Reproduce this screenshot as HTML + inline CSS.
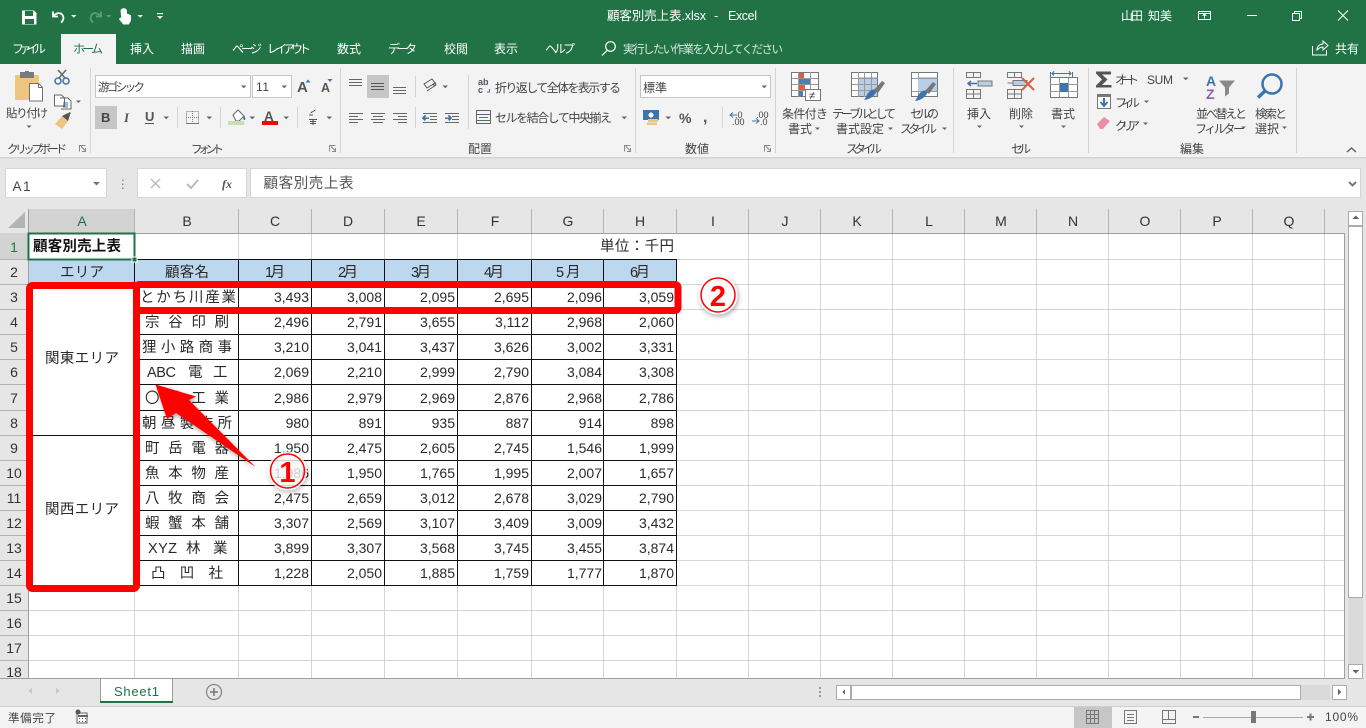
<!DOCTYPE html>
<html lang="ja"><head><meta charset="utf-8"><title>顧客別売上表.xlsx - Excel</title>
<style>
html,body{margin:0;padding:0;background:#fff;overflow:hidden;width:1366px;height:728px}
svg{display:block}
text{font-family:"Liberation Sans","Noto Sans CJK JP",sans-serif}
.w{fill:#fff;font-size:12px}
.r{fill:#444;font-size:11.5px}
.c{fill:#2a2a2a;font-size:14px}
.n text{text-anchor:end}
.h{fill:#333;font-size:14px;text-anchor:middle}
.g{stroke:#d4d4d4;stroke-width:1;fill:none}
.k{stroke:#111;stroke-width:1;fill:none}
.i{stroke:#666;stroke-width:1;fill:none}
.t{fill:#666}
</style></head><body>
<svg width="1366" height="728" viewBox="0 0 1366 728" xmlns="http://www.w3.org/2000/svg" shape-rendering="crispEdges">
<!-- backgrounds -->
<rect width="1366" height="728" fill="#e6e6e6"/>
<rect width="1366" height="64" fill="#217346"/>
<rect y="64" width="1366" height="93" fill="#f3f3f3"/>
<rect y="157" width="1366" height="1.5" fill="#d4d4d4"/>
<rect x="61" y="34" width="55" height="30" fill="#f3f3f3"/>

<!-- title bar -->
<g shape-rendering="auto">
<path d="M22 10.500h12l2.500 2.500v11.500h-14.500z M25 11v5h8v-5z M25 24v-5h9v5z" fill="#fff" fill-rule="evenodd"/>
<path d="M53 11.500v5h5 M53.500 16c3-3.500 6.500-3.500 8.500-1.500 2.500 2.500 1.500 6-1 8" fill="none" stroke="#fff" stroke-width="1.800"/>
<path d="M71 15l5.500 0-2.750 2.800z M143 15l-5.500 0 2.750 2.800z" fill="#e8f0ea"/>
<path d="M101 11.500v5h-5 M100.500 16c-3-3.500-6.500-3.500-8.500-1.500-2.500 2.500-1.500 6 1 8" fill="none" stroke="#5d9a79" stroke-width="1.800"/>
<path d="M106 15l5.500 0-2.750 2.800z" fill="#5d9a79"/>
<path d="M121 11a2.800 2.800 0 0 1 5.500 0v3l4 1.500v5l-2 3.500h-5l-4-5 1.500-1 1 1z" fill="#fff" stroke="#fff"/>
<rect x="157" y="13" width="6" height="1.200" fill="#fff"/><path d="M157 16h6l-3 3z" fill="#fff"/>
</g>
<text class="w" x="607" y="20" textLength="99" style="font-size:12.500px">顧客別売上表.xlsx</text>
<text class="w" x="714" y="20" style="font-size:12.500px">-</text>
<text class="w" x="728" y="20" textLength="29" style="font-size:12.500px">Excel</text>
<text class="w" x="1121" y="20" textLength="22">山田</text>
<text class="w" x="1148" y="20" textLength="24">知美</text>
<g fill="none" stroke="#fff">
<rect x="1198.500" y="11.500" width="12" height="8"/><path d="M1198 13.500h13 M1204.500 18.500v-4 M1202.500 16l2-2 2 2"/>
<path d="M1247 15.500h10"/>
<rect x="1292.500" y="13.500" width="7" height="7"/><path d="M1294.500 13.500v-2h7v7h-2"/>
<path d="M1338 10.500l10 10 M1348 10.500l-10 10" shape-rendering="auto"/>
</g>

<!-- tabs -->
<text class="w" x="12" y="53" textLength="34">ファイル</text>
<text x="73" y="53" textLength="30" style="font-size:12px;fill:#217346">ホーム</text>
<text class="w" x="130" y="53" textLength="24">挿入</text>
<text class="w" x="181" y="53" textLength="24">描画</text>
<text class="w" x="232" y="53" textLength="30">ページ</text>
<text class="w" x="267" y="53" textLength="44">レイアウト</text>
<text class="w" x="337" y="53" textLength="24">数式</text>
<text class="w" x="388" y="53" textLength="29">データ</text>
<text class="w" x="444" y="53" textLength="24">校閲</text>
<text class="w" x="494" y="53" textLength="24">表示</text>
<text class="w" x="545" y="53" textLength="30">ヘルプ</text>
<g shape-rendering="auto" fill="none" stroke="#fff" stroke-width="1.200"><circle cx="610.500" cy="46.500" r="4.800"/><path d="M607 50.500l-5 5"/></g>
<text x="623" y="53" textLength="160" style="font-size:11.500px;fill:#d8e6dd">実行したい作業を入力してください</text>
<g shape-rendering="auto" fill="none" stroke="#fff"><path d="M1312.500 46v9h14v-5 M1317 50c0-4 3-6 6-6v-3l5 4.500-5 4.500v-3c-2 0-4 1-6 3z"/></g>
<text class="w" x="1335" y="53" textLength="24">共有</text>

<!-- ribbon separators -->
<g fill="#d4d4d4">
<rect x="90" y="68" width="1" height="85"/><rect x="340" y="68" width="1" height="85"/><rect x="635" y="68" width="1" height="85"/><rect x="775" y="68" width="1" height="85"/><rect x="953" y="68" width="1" height="85"/><rect x="1088" y="68" width="1" height="85"/><rect x="1296" y="68" width="1" height="85"/>
<rect x="415" y="76" width="1" height="21"/><rect x="415" y="107" width="1" height="21"/><rect x="468" y="75" width="1" height="54"/>
<rect x="177" y="107" width="1" height="21"/><rect x="220" y="107" width="1" height="21"/><rect x="297" y="107" width="1" height="21"/>
<rect x="722" y="107" width="1" height="21"/>
</g>

<!-- clipboard -->
<g shape-rendering="auto">
<rect x="15" y="75" width="24" height="25" rx="1" fill="#eec57f"/>
<rect x="20" y="72" width="14" height="6" fill="#7a7a7a"/><rect x="25" y="71" width="4" height="3" fill="#7a7a7a"/>
<path d="M29.500 83.500h9l4 4v13.500h-13z" fill="#fff" stroke="#707070"/>
<path d="M38.500 83.500v4h4" fill="none" stroke="#707070"/>
<circle cx="58" cy="81" r="3" fill="none" stroke="#3d74ac" stroke-width="1.500"/><circle cx="66" cy="81" r="3" fill="none" stroke="#3d74ac" stroke-width="1.500"/>
<path d="M59 78l7-8 M65 78l-7-8" stroke="#666" stroke-width="1.500"/>
<path d="M54.500 95h7l3 3v8h-10z M60 98h8l3 3v8h-10" fill="#fff" stroke="#666"/>
<path d="M63 103h5 M63 105h5 M63 107h5" stroke="#3d74ac"/>
<path d="M76 100.500h5l-2.500 2.500z" fill="#666"/>
<path d="M55 124l7-8 6 5-6 8z" fill="#eec57f"/><path d="M62 116l6-3 2 2-2 6z" fill="#555"/><path d="M68 114l1.500-2 1.500 1-1.500 2z" fill="#555"/>
</g>
<text class="r" x="6" y="117" textLength="42" style="font-size:11.500px">貼り付け</text>
<path d="M26.500 125.500h5l-2.500 2.500z" class="t" shape-rendering="auto"/>
<text class="r" x="7" y="153" textLength="60">クリップボード</text>
<g class="i" style="stroke:#888"><path d="M79.500 151.500v-6h6 M85.500 148v3.500h-3.500 M81 146.500l4 4"/></g>

<!-- font group -->
<rect x="95.500" y="75.500" width="155" height="22" fill="#fff" stroke="#c6c6c6"/>
<rect x="252.500" y="75.500" width="39" height="22" fill="#fff" stroke="#c6c6c6"/>
<text class="r" x="98" y="91" textLength="47">游ゴシック</text>
<text class="r" x="256" y="91" textLength="13" style="font-size:12px">11</text>
<path d="M241 85.500h5.500l-2.750 2.800zM281.500 85.500h5.500l-2.750 2.800z" class="t" shape-rendering="auto"/>
<text x="297" y="92" style="font-size:15px;fill:#555;font-weight:bold" textLength="11">A</text>
<path d="M305.500 82.500l2.500-3 2.500 3z" fill="#3d74ac" shape-rendering="auto"/>
<text x="321" y="92" style="font-size:12.500px;fill:#555;font-weight:bold" textLength="9">A</text>
<path d="M327.500 79h5l-2.500 3z" fill="#3d74ac" shape-rendering="auto"/>
<rect x="95" y="106" width="22" height="23" fill="#c6c6c6"/>
<text x="101" y="122" style="font-size:13px;font-weight:bold;fill:#444">B</text>
<text x="124" y="122" style="font-size:13px;font-style:italic;font-family:'Liberation Serif',serif;font-weight:bold;fill:#555">I</text>
<text x="145" y="121" style="font-size:13px;font-weight:bold;fill:#555">U</text><rect x="145" y="123" width="9" height="1" fill="#555"/>
<path d="M163.500 116.500h5.500l-2.750 2.800zM206.500 116.500h5.500l-2.750 2.800zM249.500 116.500h5.500l-2.750 2.800zM283.500 116.500h5.500l-2.750 2.800zM326.500 116.500h5.500l-2.750 2.800z" class="t" shape-rendering="auto"/>
<g fill="none" stroke="#777" stroke-dasharray="1 1"><rect x="186.500" y="111.500" width="12" height="12"/><path d="M192.500 111v12 M186 117.500h13"/></g>
<path d="M186 123.500h13" stroke="#777"/>
<g shape-rendering="auto">
<path d="M233 115l5-5 6 6-5 5h-3z" fill="#fff" stroke="#666"/><path d="M244 116c2 1 1.500 5 0 4-1-1-1-2 0-4z" fill="#3d74ac"/>
</g>
<rect x="228" y="121" width="16" height="4" fill="#c6e0b4"/>
<text x="264" y="121" style="font-size:13.500px;font-weight:bold;fill:#555">A</text>
<rect x="262" y="121" width="16" height="4" fill="#f00"/>
<g stroke="#555" fill="none"><path d="M309 115h4 M309 119.500h8 M310 121.500h6 M310 123.500h6 M313 119v6 M310.500 113l5-3"/></g>
<text class="r" x="191" y="153" textLength="33" style="font-size:11.500px">フォント</text>

<!-- alignment -->
<rect x="367" y="75" width="22" height="23" fill="#c6c6c6"/>
<g stroke="#666" fill="none">
<path d="M349 79.500h13 M349 82.500h13 M349 85.500h13"/>
<path d="M371 83.500h13 M371 86.500h13 M371 89.500h13" stroke="#555"/>
<path d="M393 87.500h13 M393 90.500h13 M393 93.500h13"/>
<path d="M349 113.500h14 M349 116.500h9 M349 119.500h14 M349 122.500h9"/>
<path d="M371 113.500h14 M373 116.500h10 M371 119.500h14 M373 122.500h10"/>
<path d="M393 113.500h14 M398 116.500h9 M393 119.500h14 M398 122.500h9"/>
<path d="M423 113.500h14 M430 116.500h7 M430 119.500h7 M423 122.500h14" />
<path d="M445 113.500h14 M452 116.500h7 M452 119.500h7 M445 122.500h14" />
</g>
<path d="M423 118h6 M425.500 115.500l-2.500 2.500 2.500 2.500" stroke="#3d74ac" fill="none" stroke-width="1.500"/>
<path d="M445 118h6 M448.500 115.500l2.500 2.500-2.500 2.500" stroke="#3d74ac" fill="none" stroke-width="1.500"/>
<g shape-rendering="auto" fill="none" stroke="#555"><path d="M424 84l8-5 3 4-8 5z M427 91l9-6 M436 85l-1-3 M436 85l-3 0"/></g>
<path d="M442.500 85.500h5.500l-2.750 2.800zM621.500 116.500h5.500l-2.750 2.800z" class="t" shape-rendering="auto"/>
<text x="478" y="85" style="font-size:9px;font-weight:bold;fill:#555">ab</text>
<text x="478" y="93" style="font-size:9px;font-weight:bold;fill:#555">c</text>
<path d="M487 92h2.500v-3" stroke="#3d74ac" fill="none"/>
<text class="r" x="495" y="92" textLength="126" style="font-size:12px">折り返して全体を表示する</text>
<rect x="476.500" y="110.500" width="14" height="13" fill="none" stroke="#666"/><path d="M477 114.500h13 M477 120.500h13" stroke="#666"/><path d="M479 117.500h9" stroke="#3d74ac"/>
<text class="r" x="495" y="122" textLength="117" style="font-size:12px">セルを結合して中央揃え</text>
<text class="r" x="468" y="153" textLength="24" style="font-size:12px">配置</text>
<g style="stroke:#888" class="i"><path d="M624.500 151.500v-6h6 M630.500 148v3.500h-3.500 M626 146.500l4 4"/><path d="M329.500 151.500v-6h6 M335.500 148v3.500h-3.500 M331 146.500l4 4"/><path d="M764.500 151.500v-6h6 M770.500 148v3.500h-3.500 M766 146.500l4 4"/></g>

<!-- number -->
<rect x="640.500" y="75.500" width="130" height="22" fill="#fff" stroke="#c6c6c6"/>
<text class="r" x="643" y="92" textLength="24" style="font-size:12px">標準</text>
<path d="M761.500 85.500h5.500l-2.750 2.800zM665.500 116.500h5.500l-2.750 2.800z" class="t" shape-rendering="auto"/>
<rect x="643" y="110" width="16" height="10" fill="#3d74ac"/><circle cx="651" cy="115" r="2.500" fill="#fff"/>
<rect x="648" y="119" width="10" height="3" fill="#eec57f"/><rect x="647" y="122.500" width="10" height="2.500" fill="#eec57f"/>
<text x="679" y="123" style="font-size:14px;font-weight:bold;fill:#555">%</text>
<text x="703" y="122" style="font-size:16px;font-weight:bold;fill:#555">,</text>
<text x="735" y="118" style="font-size:9px;fill:#444">.0</text><text x="732" y="125" style="font-size:9px;fill:#444">.00</text>
<path d="M730 115h7 M733 112.500l-3 2.500 3 2.500" fill="none" stroke="#3d74ac" shape-rendering="auto"/>
<text x="756" y="118" style="font-size:9px;fill:#444">.00</text><text x="760" y="125" style="font-size:9px;fill:#444">.0</text>
<path d="M752 121h7 M756 118.500l3 2.500-3 2.500" fill="none" stroke="#3d74ac" shape-rendering="auto"/>
<text class="r" x="685" y="153" textLength="24" style="font-size:12px">数値</text>

<!-- styles -->
<rect x="791.500" y="72.500" width="27" height="24" fill="#fff" stroke="#777"/>
<rect x="798" y="73" width="6" height="5" fill="#d9603c"/><rect x="798" y="79" width="12" height="5" fill="#4a7fb8"/><rect x="798" y="85" width="7" height="5" fill="#d9603c"/><rect x="798" y="91" width="5" height="5" fill="#4a7fb8"/>
<path d="M798.500 72v25 M810.500 72v25 M792 78.500h26 M792 84.500h26 M792 90.500h26" stroke="#999" fill="none"/>
<rect x="805.500" y="89.500" width="15" height="11" fill="#fff" stroke="#777"/>
<text x="809" y="99" style="font-size:11px;fill:#333">≠</text>
<text class="r" x="782" y="118" textLength="46" style="font-size:12px">条件付き</text>
<text class="r" x="788" y="133" textLength="24" style="font-size:12px">書式</text>
<rect x="851.500" y="72.500" width="26" height="24" fill="#fff" stroke="#777"/>
<rect x="858" y="77" width="19" height="19" fill="#b9cfe8"/>
<path d="M858.500 72v25 M864.500 72v25 M871.500 72v25 M852 78.500h26 M852 84.500h26 M852 90.500h26" stroke="#999" fill="none"/>
<g shape-rendering="auto"><path d="M866 97c2-6 7-9 11-7-1 4-5 9-13 10z" fill="#3d74ac"/><path d="M874 90l8-9 3 2-7 10z" fill="#777"/></g>
<text class="r" x="832" y="118" textLength="64" style="font-size:12px">テーブルとして</text>
<text class="r" x="836" y="133" textLength="48" style="font-size:12px">書式設定</text>
<rect x="911.500" y="72.500" width="26" height="24" fill="#fff" stroke="#777"/>
<rect x="918" y="77" width="19" height="14" fill="#b9cfe8"/>
<path d="M912 78.500h26 M918.500 72v6 M918.500 91v6 M912 91.500h26" stroke="#999" fill="none"/>
<g shape-rendering="auto"><path d="M917 98c2-6 7-9 11-7-1 4-5 9-13 10z" fill="#3d74ac"/><path d="M925 91l8-9 3 2-7 10z" fill="#777"/></g>
<text class="r" x="910" y="118" textLength="29" style="font-size:12px">セルの</text>
<text class="r" x="900" y="133" textLength="37" style="font-size:12px">スタイル</text>
<path d="M815 127.500h5l-2.500 2.500zM888 127.500h5l-2.500 2.500zM942 127.500h5l-2.500 2.500z" class="t" shape-rendering="auto"/>
<text class="r" x="846" y="153" textLength="36" style="font-size:12px">スタイル</text>

<!-- cells -->
<g class="i" style="stroke:#777">
<rect x="966.500" y="72.500" width="14" height="5"/><path d="M973.500 72v5"/>
<rect x="966.500" y="89.500" width="14" height="9"/><path d="M973.500 89v10 M966 94h14"/>
<rect x="1007.500" y="72.500" width="14" height="5"/><path d="M1014.500 72v5"/>
<rect x="1007.500" y="89.500" width="14" height="9"/><path d="M1014.500 89v10 M1007 94h14"/>
</g>
<rect x="978" y="81" width="14" height="5" fill="#b9cfe8" stroke="#777"/>
<path d="M977 83.500h-8 M971 81l-3 2.500 3 2.500" stroke="#3d74ac" fill="none" stroke-width="1.500" shape-rendering="auto"/>
<rect x="1013" y="80.500" width="14" height="5" fill="#b9cfe8" stroke="#777"/>
<path d="M1007.500 83h6" stroke="#777"/>
<path d="M1022 78l12 12 M1034 78l-12 12" stroke="#d9603c" stroke-width="2" shape-rendering="auto" fill="none"/>
<rect x="1050.500" y="77.500" width="27" height="20" fill="#fff" stroke="#777"/>
<path d="M1050 84.500h28 M1050 91.500h28 M1059.500 78v20 M1068.500 78v20" stroke="#999" fill="none"/>
<rect x="1060" y="83" width="8" height="9" fill="#3d74ac"/>
<path d="M1050.500 72v5 M1072.500 72v5 M1052 73.500h19 M1054 71.500l-2 2 2 2 M1069 71.500l2 2-2 2" stroke="#3d74ac" fill="none"/>
<text class="r" x="967" y="118" textLength="24" style="font-size:12px">挿入</text>
<text class="r" x="1009" y="118" textLength="24" style="font-size:12px">削除</text>
<text class="r" x="1051" y="118" textLength="24" style="font-size:12px">書式</text>
<path d="M977 125.500h5l-2.500 2.500zM1019 125.500h5l-2.500 2.500zM1061 125.500h5l-2.500 2.500z" class="t" shape-rendering="auto"/>
<text class="r" x="1011" y="153" textLength="20" style="font-size:12px">セル</text>

<!-- editing -->
<path d="M1096 71.500h15v3h-9l5.500 5-5.500 5.500h9.500v2.500h-15.500v-2l6-6-6-6z" fill="#555" shape-rendering="auto"/>
<text class="r" x="1115" y="84" textLength="24" style="font-size:12px">オート</text>
<text class="r" x="1147" y="84" textLength="26" style="font-size:12px">SUM</text>
<path d="M1183 77.500h5.500l-2.750 2.800zM1144 100.500h5l-2.500 2.500zM1143 122.500h5l-2.500 2.500z" class="t" shape-rendering="auto"/>
<rect x="1097.500" y="94.500" width="13" height="14" fill="#fff" stroke="#777"/><rect x="1098" y="94" width="12" height="3" fill="#777"/>
<path d="M1104 98v7 M1100.500 102l3.500 4 3.500-4" stroke="#3d74ac" fill="none" stroke-width="2" shape-rendering="auto"/>
<text class="r" x="1115" y="107" textLength="25" style="font-size:12px">フィル</text>
<path d="M1097 124l7-7 6 4-7 8h-3z" fill="#e98fa3" shape-rendering="auto"/>
<text class="r" x="1115" y="130" textLength="25" style="font-size:12px">クリア</text>
<text x="1206" y="86" style="font-size:14px;font-weight:bold;fill:#3d74ac" textLength="11">A</text>
<text x="1206" y="99" style="font-size:14px;font-weight:bold;fill:#8d5fb0" textLength="11">Z</text>
<path d="M1219 80.500h16l-6 7v6l-4 3v-9z" fill="#888" shape-rendering="auto"/>
<g shape-rendering="auto" fill="none"><circle cx="1272" cy="84" r="9.500" stroke="#3d74ac" stroke-width="2.500"/><path d="M1265 91l-7 6.500" stroke="#3d74ac" stroke-width="3.500"/></g>
<text class="r" x="1196" y="118" textLength="51" style="font-size:12px">並べ替えと</text>
<text class="r" x="1195" y="133" textLength="50" style="font-size:12px">フィルター</text>
<text class="r" x="1255" y="118" textLength="32" style="font-size:12px">検索と</text>
<text class="r" x="1255" y="133" textLength="24" style="font-size:12px">選択</text>
<path d="M1241 126.500h5l-2.500 2.500zM1282 126.500h5l-2.500 2.500z" class="t" shape-rendering="auto"/>
<text class="r" x="1180" y="153" textLength="24" style="font-size:12px">編集</text>
<path d="M1347 152l4.500-4 4.500 4" fill="none" stroke="#666" stroke-width="1.500" shape-rendering="auto"/>

<!-- formula bar -->
<rect x="5.500" y="168.500" width="101" height="29" fill="#fff" stroke="#d4d4d4"/>
<rect x="137.500" y="168.500" width="109" height="29" fill="#fff" stroke="#d4d4d4"/>
<rect x="250.500" y="168.500" width="1110" height="29" fill="#fff" stroke="#d4d4d4"/>
<text x="12.500" y="191" style="font-size:13.500px;fill:#444" textLength="18">A1</text>
<path d="M93 182h7l-3.500 3.500z" fill="#777" shape-rendering="auto"/>
<path d="M122 179.500h1.500v1.500h-1.500zM122 183.500h1.500v1.500h-1.500zM122 187.500h1.500v1.500h-1.500z" fill="#888"/>
<path d="M151 179l9 9 M160 179l-9 9" stroke="#bbb" stroke-width="1.500" fill="none" shape-rendering="auto"/>
<path d="M187 184l4 4 7-8" stroke="#bbb" stroke-width="2" fill="none" shape-rendering="auto"/>
<text x="222" y="188" style="font-family:'Liberation Serif',serif;font-style:italic;font-weight:bold;font-size:12px;fill:#555">fx</text>
<text x="263.500" y="188" textLength="90" style="font-size:14.500px;fill:#555">顧客別売上表</text>
<path d="M1349 182l3.500 3.500 3.500-3.500" stroke="#777" stroke-width="2" fill="none" shape-rendering="auto"/>

<!-- headers -->
<rect x="0" y="209" width="1345" height="471" fill="#e6e6e6"/>
<path d="M8 228h17v-16z" fill="#b4b4b4" shape-rendering="auto"/>
<rect x="29" y="209" width="105" height="24" fill="#d2d2d2"/>
<rect x="0" y="233" width="28" height="26" fill="#d2d2d2"/>
<rect x="29" y="233" width="1315" height="445" fill="#fff"/>
<g fill="#b4b4b4">
<rect x="134" y="209" width="1" height="24"/><rect x="238" y="209" width="1" height="24"/><rect x="311" y="209" width="1" height="24"/><rect x="384" y="209" width="1" height="24"/><rect x="457" y="209" width="1" height="24"/><rect x="531" y="209" width="1" height="24"/><rect x="603" y="209" width="1" height="24"/><rect x="676" y="209" width="1" height="24"/><rect x="748" y="209" width="1" height="24"/><rect x="820" y="209" width="1" height="24"/><rect x="892" y="209" width="1" height="24"/><rect x="964" y="209" width="1" height="24"/><rect x="1036" y="209" width="1" height="24"/><rect x="1108" y="209" width="1" height="24"/><rect x="1180" y="209" width="1" height="24"/><rect x="1252" y="209" width="1" height="24"/><rect x="1324" y="209" width="1" height="24"/>
<rect x="0" y="259" width="28" height="1"/><rect x="0" y="284" width="28" height="1"/><rect x="0" y="309" width="28" height="1"/><rect x="0" y="334" width="28" height="1"/><rect x="0" y="359" width="28" height="1"/><rect x="0" y="384" width="28" height="1"/><rect x="0" y="410" width="28" height="1"/><rect x="0" y="435" width="28" height="1"/><rect x="0" y="460" width="28" height="1"/><rect x="0" y="485" width="28" height="1"/><rect x="0" y="510" width="28" height="1"/><rect x="0" y="535" width="28" height="1"/><rect x="0" y="560" width="28" height="1"/><rect x="0" y="585" width="28" height="1"/><rect x="0" y="610" width="28" height="1"/><rect x="0" y="635" width="28" height="1"/><rect x="0" y="660" width="28" height="1"/>
</g>
<rect x="28" y="233" width="1317" height="1" fill="#9f9f9f"/>
<rect x="28" y="209" width="1" height="469" fill="#9f9f9f"/>
<rect x="1344" y="233" width="1" height="445" fill="#9f9f9f"/>

<!-- gridlines -->
<path class="g" d="M748.500 234V678 M820.500 234V678 M892.500 234V678 M964.500 234V678 M1036.500 234V678 M1108.500 234V678 M1180.500 234V678 M1252.500 234V678 M1324.500 234V678
M134.500 585V678 M238.500 585V678 M311.500 585V678 M384.500 585V678 M457.500 585V678 M531.500 585V678 M603.500 585V678 M676.500 585V678
M238.500 234V259 M311.500 234V259 M384.500 234V259 M457.500 234V259 M531.500 234V259
M29 259.500H1344 M29 284.500H1344 M29 309.500H1344 M29 334.500H1344 M29 359.500H1344 M29 384.500H1344 M29 410.500H1344 M29 435.500H1344 M29 460.500H1344 M29 485.500H1344 M29 510.500H1344 M29 535.500H1344 M29 560.500H1344 M29 585.500H1344 M29 610.500H1344 M29 635.500H1344 M29 660.500H1344"/>

<!-- table -->
<rect x="29" y="260" width="648" height="24" fill="#bdd7ee"/>
<rect x="29" y="285" width="105" height="300" fill="#fff"/>
<rect x="135" y="285" width="542" height="300" fill="#fff"/>
<path class="k" d="M134.500 259V586 M238.500 259V586 M311.500 259V586 M384.500 259V586 M457.500 259V586 M531.500 259V586 M603.500 259V586 M676.500 259V586
M29 259.500H677 M29 284.500H677 M135 309.500H677 M135 334.500H677 M135 359.500H677 M135 384.500H677 M135 410.500H677 M29 435.500H677 M135 460.500H677 M135 485.500H677 M135 510.500H677 M135 535.500H677 M135 560.500H677 M29 585.500H677"/>

<!-- selection -->
<rect x="28.500" y="233.500" width="106" height="26" fill="none" stroke="#217346" stroke-width="2"/>
<rect x="132" y="257" width="5" height="5" fill="#217346" stroke="#fff" stroke-width="1"/>

<!-- labels -->
<g class="h">
<text x="82" y="226" style="fill:#217346">A</text><text x="187" y="226">B</text><text x="275" y="226">C</text><text x="348" y="226">D</text><text x="421" y="226">E</text><text x="495" y="226">F</text><text x="568" y="226">G</text><text x="640" y="226">H</text><text x="713" y="226">I</text><text x="785" y="226">J</text><text x="857" y="226">K</text><text x="929" y="226">L</text><text x="1001" y="226">M</text><text x="1073" y="226">N</text><text x="1145" y="226">O</text><text x="1217" y="226">P</text><text x="1289" y="226">Q</text>
<text x="14" y="252" style="fill:#217346">1</text><text x="14" y="277">2</text><text x="14" y="302">3</text><text x="14" y="327">4</text><text x="14" y="352">5</text><text x="14" y="377">6</text><text x="14" y="403">7</text><text x="14" y="428">8</text><text x="14" y="453">9</text><text x="14" y="478">10</text><text x="14" y="503">11</text><text x="14" y="528">12</text><text x="14" y="553">13</text><text x="14" y="578">14</text><text x="14" y="603">15</text><text x="14" y="628">16</text><text x="14" y="653">17</text><text x="14" y="677">18</text>
</g>

<!-- cell text -->
<g class="c" style="font-size:14.500px">
<text x="33" y="251" textLength="88" style="font-weight:bold;fill:#111">顧客別売上表</text>
<text x="600" y="251" textLength="74">単位：千円</text>
<text x="60" y="277" textLength="44">エリア</text><text x="165" y="277" textLength="44">顧客名</text>
<text x="265" y="277" textLength="20">1月</text><text x="338" y="277" textLength="20">2月</text><text x="411" y="277" textLength="20">3月</text><text x="484" y="277" textLength="20">4月</text><text x="556" y="277">5</text><text x="566" y="277">月</text><text x="630" y="277" textLength="20">6月</text>
<text x="45" y="363" textLength="74">関東エリア</text>
<text x="45" y="514" textLength="74">関西エリア</text>
<text x="140" y="302" textLength="96">とかち川産業</text>
<text x="145" y="327" textLength="84">宗谷印刷</text>
<text x="142" y="352" textLength="90">狸小路商事</text>
<text x="147" y="377" textLength="29">ABC</text><text x="188" y="377">電</text><text x="213" y="377">工</text>
<text x="145" y="403" textLength="84">〇〇工業</text>
<text x="142" y="428" textLength="90">朝昼製作所</text>
<text x="145" y="453" textLength="84">町岳電器</text>
<text x="145" y="478" textLength="84">魚本物産</text>
<text x="145" y="503" textLength="84">八牧商会</text>
<text x="145" y="528" textLength="84">蝦蟹本舗</text>
<text x="148" y="553" textLength="29">XYZ</text><text x="186" y="553">林</text><text x="213" y="553">業</text>
<text x="151" y="578" textLength="72">凸凹社</text>
</g>
<g class="c n">
<text x="309" y="302">3,493</text><text x="382" y="302">3,008</text><text x="455" y="302">2,095</text><text x="529" y="302">2,695</text><text x="602" y="302">2,096</text><text x="674" y="302">3,059</text>
<text x="309" y="327">2,496</text><text x="382" y="327">2,791</text><text x="455" y="327">3,655</text><text x="529" y="327">3,112</text><text x="602" y="327">2,968</text><text x="674" y="327">2,060</text>
<text x="309" y="352">3,210</text><text x="382" y="352">3,041</text><text x="455" y="352">3,437</text><text x="529" y="352">3,626</text><text x="602" y="352">3,002</text><text x="674" y="352">3,331</text>
<text x="309" y="377">2,069</text><text x="382" y="377">2,210</text><text x="455" y="377">2,999</text><text x="529" y="377">2,790</text><text x="602" y="377">3,084</text><text x="674" y="377">3,308</text>
<text x="309" y="403">2,986</text><text x="382" y="403">2,979</text><text x="455" y="403">2,969</text><text x="529" y="403">2,876</text><text x="602" y="403">2,968</text><text x="674" y="403">2,786</text>
<text x="309" y="428">980</text><text x="382" y="428">891</text><text x="455" y="428">935</text><text x="529" y="428">887</text><text x="602" y="428">914</text><text x="674" y="428">898</text>
<text x="309" y="453">1,950</text><text x="382" y="453">2,475</text><text x="455" y="453">2,605</text><text x="529" y="453">2,745</text><text x="602" y="453">1,546</text><text x="674" y="453">1,999</text>
<text x="309" y="478">1,986</text><text x="382" y="478">1,950</text><text x="455" y="478">1,765</text><text x="529" y="478">1,995</text><text x="602" y="478">2,007</text><text x="674" y="478">1,657</text>
<text x="309" y="503">2,475</text><text x="382" y="503">2,659</text><text x="455" y="503">3,012</text><text x="529" y="503">2,678</text><text x="602" y="503">3,029</text><text x="674" y="503">2,790</text>
<text x="309" y="528">3,307</text><text x="382" y="528">2,569</text><text x="455" y="528">3,107</text><text x="529" y="528">3,409</text><text x="602" y="528">3,009</text><text x="674" y="528">3,432</text>
<text x="309" y="553">3,899</text><text x="382" y="553">3,307</text><text x="455" y="553">3,568</text><text x="529" y="553">3,745</text><text x="602" y="553">3,455</text><text x="674" y="553">3,874</text>
<text x="309" y="578">1,228</text><text x="382" y="578">2,050</text><text x="455" y="578">1,885</text><text x="529" y="578">1,759</text><text x="602" y="578">1,777</text><text x="674" y="578">1,870</text>
</g>

<!-- annotations -->
<defs><filter id="s" x="-30%" y="-30%" width="160%" height="160%"><feDropShadow dx="1" dy="2" stdDeviation="2.500" flood-color="#000" flood-opacity=".35"/></filter></defs>
<g shape-rendering="auto">
<rect x="29.500" y="285.500" width="107" height="303" rx="3" fill="none" stroke="#f00" stroke-width="7"/>
<rect x="136.500" y="284.500" width="541.500" height="26" rx="3" fill="none" stroke="#f00" stroke-width="7"/>
<path d="M155.500 384.500L196 396.500 189 400 255.500 467 176 413 167 419z" fill="#f00" filter="url(#s)"/>
<circle cx="287.500" cy="471" r="19.500" fill="#fff" fill-opacity=".75" filter="url(#s)"/>
<circle cx="287.500" cy="471" r="17" fill="none" stroke="#f00" stroke-width="1.500"/>
<text x="287.500" y="482" text-anchor="middle" style="font-size:29px;font-weight:bold;fill:#f00">1</text>
<circle cx="718" cy="295" r="19.500" fill="#fff" fill-opacity=".95" filter="url(#s)"/>
<circle cx="718" cy="295" r="17" fill="none" stroke="#f00" stroke-width="1.500"/>
<text x="718" y="306" text-anchor="middle" style="font-size:29px;font-weight:bold;fill:#f00">2</text>
</g>

<!-- vertical scrollbar -->
<rect x="1345" y="209" width="21" height="498" fill="#e6e6e6"/>
<rect x="1348" y="212" width="15" height="452" fill="#dadada"/>
<rect x="1348.500" y="211.500" width="14" height="14" fill="#fff" stroke="#ababab"/>
<path d="M1352 219l3.500-3.500 3.500 3.500z" fill="#666"/>
<rect x="1348.500" y="226.500" width="14" height="371" fill="#fff" stroke="#ababab"/>
<rect x="1348.500" y="664.500" width="14" height="14" fill="#fff" stroke="#ababab"/>
<path d="M1352 670l3.500 3.500 3.500-3.500z" fill="#666"/>

<!-- sheet tabs -->
<rect x="0" y="678" width="1345" height="1" fill="#9f9f9f"/>
<rect x="0" y="679" width="1345" height="28" fill="#e6e6e6"/>
<path d="M100.500 703V678.500H172.500V703" fill="#fff" stroke="#9f9f9f"/>
<rect x="100" y="701" width="73" height="2" fill="#217346"/>
<text x="114" y="696" textLength="45" style="font-size:13px;fill:#217346">Sheet1</text>
<path d="M32 688v6l-4-3zM56 688v6l4-3z" fill="#c8c8c8"/>
<g shape-rendering="auto"><circle cx="214" cy="692" r="7.500" fill="none" stroke="#888" stroke-width="1.300"/><path d="M210 692h8 M214 688v8" stroke="#777" stroke-width="1.500"/></g>
<path d="M819 687h2v2h-2zM819 691h2v2h-2zM819 695h2v2h-2z" fill="#999"/>
<rect x="836.500" y="685.500" width="14" height="14" fill="#fff" stroke="#ababab"/>
<path d="M845 689v6l-3-3z" fill="#666"/>
<rect x="851.500" y="685.500" width="449" height="14" fill="#fff" stroke="#ababab"/>
<rect x="1301" y="685" width="29" height="15" fill="#dadada"/>
<rect x="1332.500" y="685.500" width="14" height="14" fill="#fff" stroke="#ababab"/>
<path d="M1338 689v6l3-3z" fill="#666"/>

<!-- status bar -->
<rect x="0" y="707" width="1366" height="21" fill="#f3f3f3"/>
<rect x="0" y="706" width="1366" height="1" fill="#cfcfcf"/>
<text x="8" y="722" textLength="48" style="font-size:11.500px;fill:#444">準備完了</text>
<rect x="77" y="713" width="10" height="10" fill="none" stroke="#666"/><path d="M78 715h10v2h-10zM79 718h1v1h-1zM82 718h1v1h-1zM85 718h1v1h-1zM79 721h1v1h-1zM82 721h1v1h-1zM85 721h1v1h-1z" fill="#666"/><circle cx="78" cy="712" r="2.500" fill="#555" shape-rendering="auto"/>
<rect x="1074" y="707" width="38" height="21" fill="#c6c6c6"/>
<g fill="none" stroke="#777">
<path d="M1086.500 710.500h12v13h-12z M1090.500 710v14 M1094.500 710v14 M1086 714.500h13 M1086 718.500h13"/>
<path d="M1124.500 710.500h12v13h-12z M1127 714.500h7 M1127 717.500h7 M1127 720.500h7"/>
<path d="M1162.500 710.500h13v13h-13z M1162 719.500h14 M1168.500 710v9"/>
</g>
<rect x="1193" y="716" width="6" height="2" fill="#777"/>
<rect x="1203" y="717" width="100" height="1" fill="#aaa"/>
<rect x="1251" y="711" width="5" height="12" fill="#777"/>
<path d="M1307 717h7 M1310.500 713.500v7" stroke="#777" stroke-width="2" fill="none"/>
<text x="1325" y="721" textLength="33" style="font-size:12px;fill:#444">100%</text>
</svg>
</body></html>
